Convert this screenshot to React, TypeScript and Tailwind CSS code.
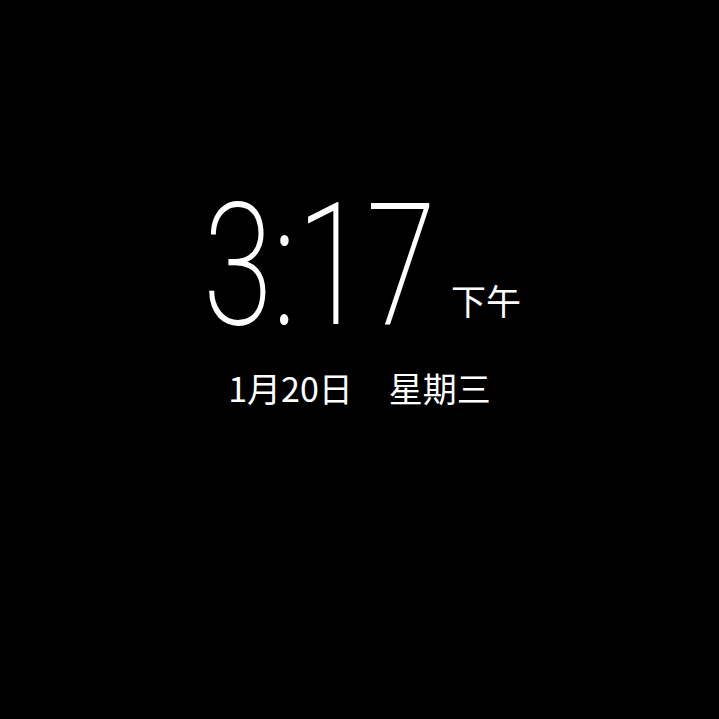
export default function App() {
  return (
    <div className="w-[719px] h-[719px] bg-black text-white flex flex-col items-center font-['Noto_Sans_CJK_SC',sans-serif]">
      <div className="flex items-end mt-[180px] ml-[2px]">
        <span className="text-[171px] leading-none font-extralight font-['Roboto',sans-serif] scale-x-[0.74] -mx-[38px]">3:17</span>
        <span className="text-[35px] leading-none ml-[12px] mb-[34px]">下午</span>
      </div>
      <div className="flex gap-[36px] mt-[20px] text-[34px] leading-none">
        <span>1月20日</span>
        <span>星期三</span>
      </div>
    </div>
  );
}
